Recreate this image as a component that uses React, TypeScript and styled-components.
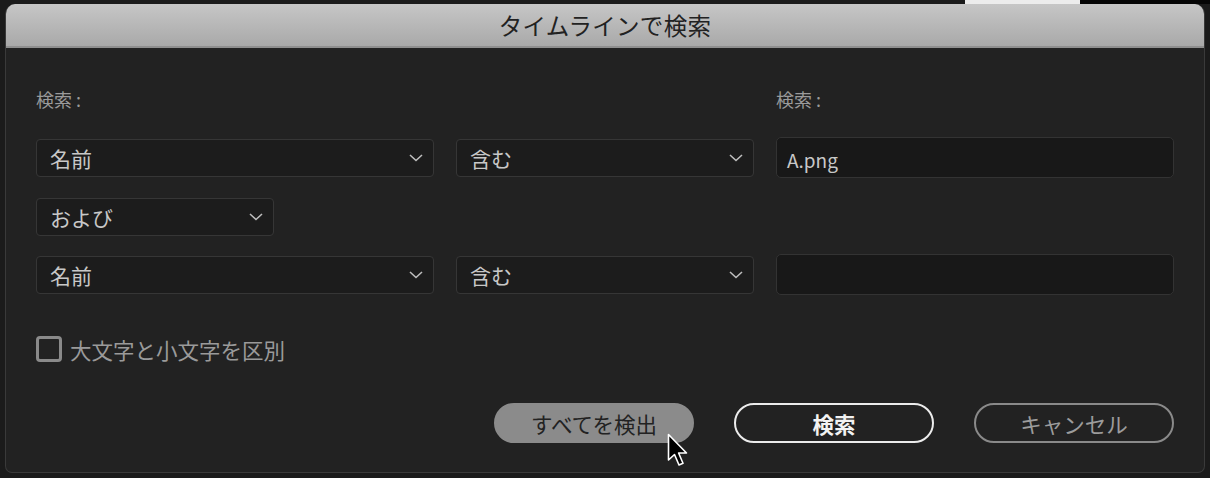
import React from "react";
import styled, { createGlobalStyle } from "styled-components";

const Global = createGlobalStyle`
  html, body { margin: 0; padding: 0; background: #1b1b1b; }
  body { width: 1210px; height: 478px; overflow: hidden; position: relative;
    font-family: "Noto Sans CJK JP", "Noto Sans", sans-serif; }
`;

const Backdrop = styled.div`
  position: relative;
  width: 1210px;
  height: 478px;
  padding: 4px 5px 0 5px;
  box-sizing: border-box;
  background: #1b1b1b;
`;

const TopStrip = styled.div<{ $left: number; $w: number; $c: string }>`
  position: absolute;
  top: 0;
  left: ${(p) => p.$left}px;
  width: ${(p) => p.$w}px;
  height: 4px;
  background: ${(p) => p.$c};
`;

const Dialog = styled.div`
  width: 1200px;
  height: 469px;
  box-sizing: border-box;
  border: 1px solid #3a3a3a;
  border-top: none;
  border-radius: 10px 10px 7px 7px;
  background: #222222;
  overflow: hidden;
  display: flex;
  flex-direction: column;
`;

const TitleBar = styled.div`
  height: 42px;
  border-bottom: 2px solid #8f8f8f;
  background: linear-gradient(#c6c6c6, #a9a9a9);
  display: flex;
  align-items: center;
  justify-content: center;
  color: #222;
  font-size: 23.5px;
  letter-spacing: 0.3px;
`;

const Body = styled.div`
  padding: 39px 30px 0 30px;
  display: grid;
  grid-template-columns: 398px 298px 398px;
  column-gap: 22px;
`;

const Label = styled.div<{ $col: number }>`
  grid-column: ${(p) => p.$col};
  color: #9a9a9a;
  font-size: 18px;
  line-height: 24px;
  height: 24px;
`;

const Row = styled.div<{ $mt: number }>`
  grid-column: 1 / 4;
  display: grid;
  grid-template-columns: 398px 298px 398px;
  column-gap: 22px;
  align-items: center;
  height: 41px;
  margin-top: ${(p) => p.$mt}px;
`;

const SelectBox = styled.div<{ $w?: number }>`
  height: 38px;
  width: ${(p) => (p.$w ? `${p.$w}px` : "auto")};
  box-sizing: border-box;
  border: 1px solid #363636;
  border-radius: 4px;
  background: #1c1c1c;
  display: flex;
  align-items: center;
  justify-content: space-between;
  padding: 0 10px 0 13px;
  color: #c8c8c8;
  font-size: 21px;
`;

const TextBox = styled.div`
  height: 41px;
  box-sizing: border-box;
  border: 1px solid #333;
  border-radius: 5px;
  background: #181818;
  display: flex;
  align-items: center;
  padding: 4px 10px 0 10px;
  color: #c8c8c8;
  font-size: 19px;
`;

const CheckRow = styled.div`
  grid-column: 1 / 4;
  display: flex;
  align-items: center;
  gap: 8px;
  margin-top: 40px;
  color: #9a9a9a;
  font-size: 21.5px;
  height: 28px;
`;

const CheckBox = styled.div`
  width: 26px;
  height: 26px;
  box-sizing: border-box;
  border: 3px solid #8a8a8a;
  border-radius: 4px;
`;

const ButtonRow = styled.div`
  grid-column: 1 / 4;
  display: flex;
  justify-content: flex-end;
  gap: 40px;
  margin-top: 40px;
`;

const Button = styled.div<{ $kind: "fill" | "primary" | "ghost" }>`
  width: 200px;
  height: 40px;
  box-sizing: border-box;
  border-radius: 20px;
  display: flex;
  align-items: center;
  justify-content: center;
  font-size: 21.5px;
  ${(p) =>
    p.$kind === "fill"
      ? `background: #8b8b8b; color: #222; border: 2px solid #8b8b8b;`
      : p.$kind === "primary"
      ? `border: 2px solid #ececec; color: #f2f2f2; font-weight: 700;`
      : `border: 2px solid #8a8a8a; color: #9c9c9c;`}
`;

const Cursor = styled.svg`
  position: absolute;
  left: 667px;
  top: 433px;
`;

const Chevron = () => (
  <svg width="14" height="8" viewBox="0 0 14 8">
    <path d="M1 1 L7 6.5 L13 1" fill="none" stroke="#bdbdbd" strokeWidth="1.6" />
  </svg>
);

export default function App() {
  return (
    <>
      <Global />
      <Backdrop>
        <TopStrip $left={965} $w={115} $c="#ececec" />
        <TopStrip $left={1080} $w={130} $c="#050505" />
        <Dialog>
          <TitleBar>タイムラインで検索</TitleBar>
          <Body>
            <Label $col={1}>検索 :</Label>
            <Label $col={3}>検索 :</Label>
            <Row $mt={26}>
              <SelectBox>名前<Chevron /></SelectBox>
              <SelectBox>含む<Chevron /></SelectBox>
              <TextBox>A.png</TextBox>
            </Row>
            <Row $mt={18}>
              <SelectBox $w={238}>および<Chevron /></SelectBox>
            </Row>
            <Row $mt={17}>
              <SelectBox>名前<Chevron /></SelectBox>
              <SelectBox>含む<Chevron /></SelectBox>
              <TextBox />
            </Row>
            <CheckRow>
              <CheckBox />
              大文字と小文字を区別
            </CheckRow>
            <ButtonRow>
              <Button $kind="fill">すべてを検出</Button>
              <Button $kind="primary">検索</Button>
              <Button $kind="ghost">キャンセル</Button>
            </ButtonRow>
          </Body>
        </Dialog>
        <Cursor width="24" height="38" viewBox="0 0 24 38">
          <path d="M1.5 1.5 L1.5 27 L7.5 21.5 L12 32 L16 30.3 L11.6 20 L19.5 20 Z" fill="#000" stroke="#fff" strokeWidth="1.6" strokeLinejoin="round" />
        </Cursor>
      </Backdrop>
    </>
  );
}
